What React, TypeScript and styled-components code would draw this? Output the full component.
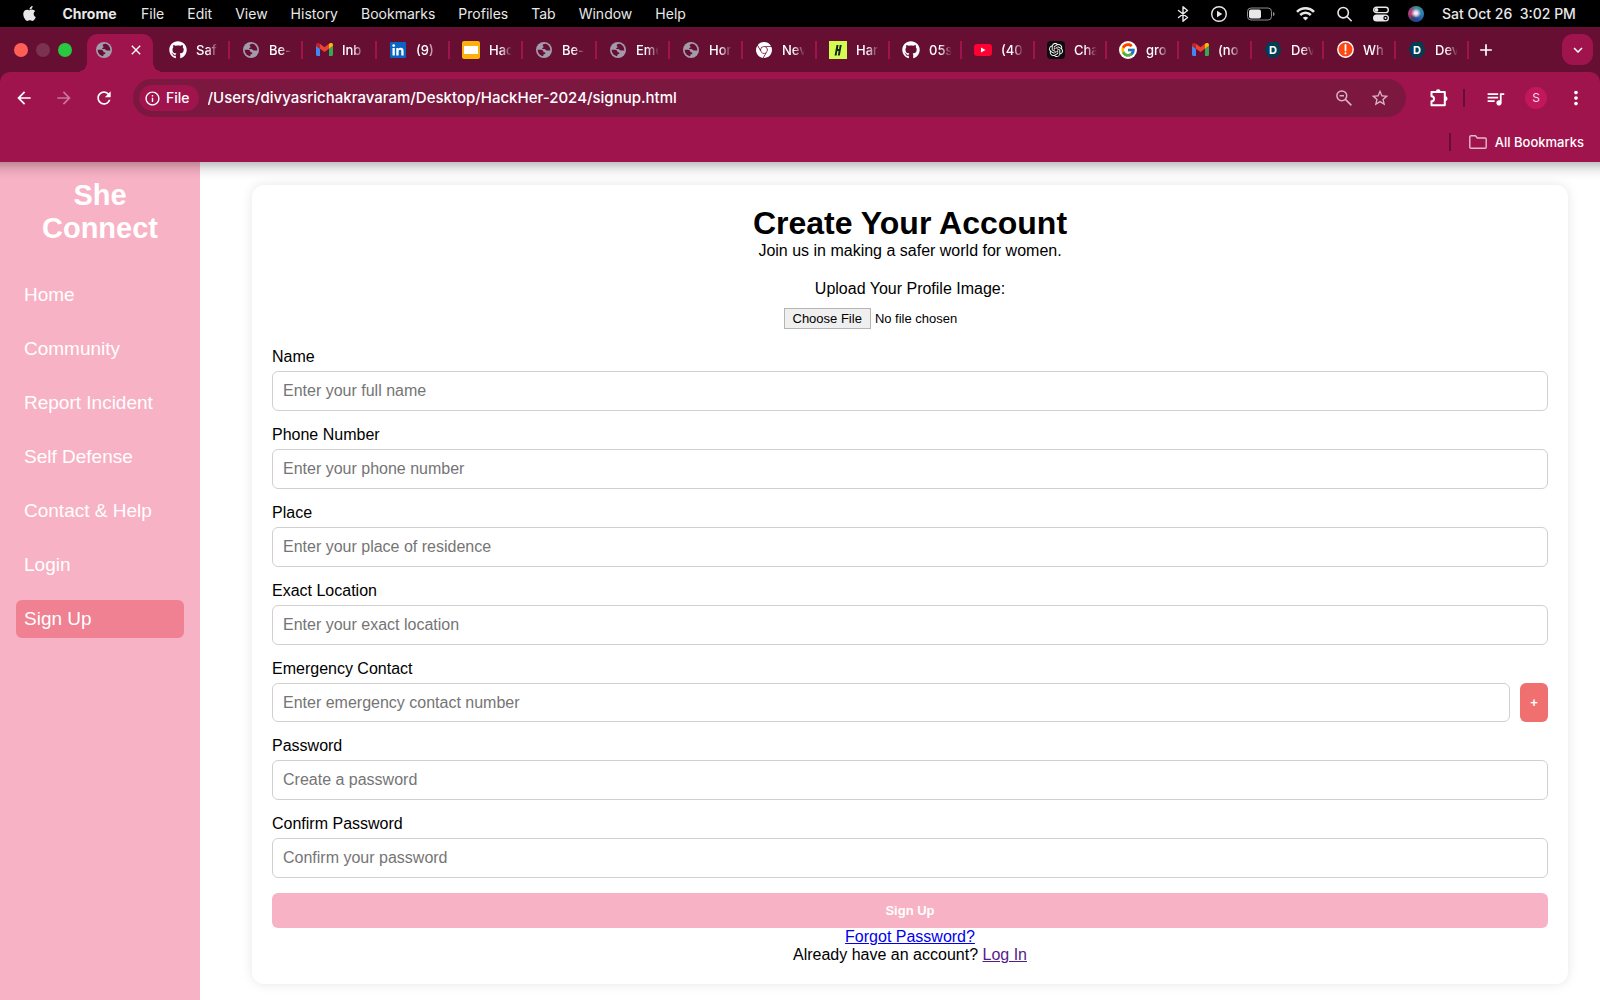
import React from "react";
import styled, { createGlobalStyle } from "styled-components";
import {
  MdAdd,
  MdArrowBack,
  MdArrowForward,
  MdClose,
  MdInfoOutline,
  MdKeyboardArrowDown,
  MdMoreVert,
  MdQueueMusic,
  MdRefresh,
  MdStarBorder,
} from "react-icons/md";
import { FaApple, FaGithub } from "react-icons/fa";
import { FcGoogle } from "react-icons/fc";
import { SiGooglechrome, SiOpenai } from "react-icons/si";

const color = {
  strip: "#660f33",
  toolbar: "#9f144d",
  field: "#7c173f",
  pink: "#f8b2c5",
  pinkActive: "#f08192",
  coral: "#f07070",
};

const uiFont = `Inter, Roboto, "Liberation Sans", sans-serif`;
const pageFont = `"Liberation Sans", Arial, sans-serif`;

const GlobalStyle = createGlobalStyle`
  *, *::before, *::after { box-sizing: border-box; }
  body { margin: 0; background: #fff; color: #000; font-family: ${pageFont}; font-size: 16px; line-height: 18px; }
  button, input { font-family: inherit; margin: 0; }
  h1, h2, p, ul { margin: 0; padding: 0; }
  svg { display: block; flex: none; }
`;

const Screen = styled.div`
  display: flex;
  flex-direction: column;
  min-height: 100vh;
`;

const PlainButton = styled.button`
  display: flex;
  align-items: center;
  justify-content: center;
  padding: 0;
  border: 0;
  background: none;
  color: #fff;
`;

/* ---------- system menu bar ---------- */

const MenuBar = styled.header`
  display: flex;
  align-items: center;
  justify-content: space-between;
  height: 27px;
  padding: 0 20px 0 21px;
  background: #000;
  color: #e8e8e8;
  font: 500 14px/18px ${uiFont};
`;

const Menus = styled.nav`
  display: flex;
  align-items: center;
  gap: 23px;
`;

const MenuItem = styled(PlainButton)<{ $bold?: boolean }>`
  min-width: ${(p) => (p.$bold ? "57px" : "0")};
  color: inherit;
  font: ${(p) => (p.$bold ? 700 : 400)} 14px/18px ${uiFont};
`;

const StatusItems = styled.div`
  display: flex;
  align-items: center;
  gap: 18px;
  white-space: pre;
`;

const Clock = styled.span`
  min-width: 138px;
`;

const Siri = styled.span`
  width: 16px;
  height: 16px;
  border-radius: 50%;
  background: radial-gradient(circle at 50% 45%, #f4e6f4 0 12%, transparent 42%),
    conic-gradient(#3b8f8b, #2d7fb8 25%, #234c9a 45%, #35406f 60%, #c0396b 75%, #8a4a8a 88%, #3b8f8b);
`;

/* ---------- tab strip ---------- */

const TabStrip = styled.div`
  display: flex;
  align-items: center;
  height: 45px;
  padding: 0 7px 0 14px;
  background: ${color.strip};
`;

const WindowControls = styled.div`
  display: flex;
  gap: 8px;
  margin-right: 15px;
`;

const Light = styled.button<{ $fill: string }>`
  width: 14px;
  height: 14px;
  padding: 0;
  border: 0;
  border-radius: 50%;
  background: ${(p) => p.$fill};
`;

const ActiveTab = styled.div`
  position: relative;
  display: flex;
  align-items: center;
  justify-content: space-between;
  align-self: flex-end;
  width: 66px;
  height: 38px;
  margin-right: 4px;
  padding: 0 9px 6px;
  border-radius: 10px 10px 0 0;
  background: ${color.toolbar};

  &::before,
  &::after {
    content: "";
    position: absolute;
    bottom: 0;
    width: 10px;
    height: 10px;
  }
  &::before {
    right: 100%;
    background: radial-gradient(circle at 0 0, transparent 10px, ${color.toolbar} 10px);
  }
  &::after {
    left: 100%;
    background: radial-gradient(circle at 100% 0, transparent 10px, ${color.toolbar} 10px);
  }
`;

const TabList = styled.div`
  display: flex;
`;

const Tab = styled(PlainButton)`
  justify-content: flex-start;
  gap: 9px;
  width: 73px;
  height: 18px;
  padding-left: 12px;
  border-right: 2px solid ${color.toolbar};
  font: 500 13px/18px ${uiFont};

  &:nth-child(3n) { width: 74px; }
  &:nth-child(n + 11) { width: 72px; }
  &:nth-child(n + 11):nth-child(3n) { width: 73px; }
`;

const TabIcon = styled.span`
  display: grid;
  place-items: center;
  width: 18px;
  height: 18px;
`;

const TabTitle = styled.span`
  width: 24px;
  white-space: nowrap;
  text-align: left;
  mask-image: linear-gradient(90deg, #000 45%, transparent 95%);
`;

const NewTab = styled(PlainButton)`
  width: 34px;
`;

const TabSearch = styled(PlainButton)`
  width: 31px;
  height: 31px;
  margin-left: auto;
  border-radius: 11px;
  background: ${color.toolbar};
`;

/* ---------- toolbar ---------- */

const ToolbarBack = styled.div`
  position: relative;
  background: ${color.strip};

  &::after {
    content: "";
    position: absolute;
    top: 100%;
    left: 0;
    right: 0;
    height: 18px;
    background: linear-gradient(rgba(0, 0, 0, 0.24), rgba(0, 0, 0, 0.09) 40%, rgba(0, 0, 0, 0.02) 75%, transparent);
    pointer-events: none;
  }
`;

const Toolbar = styled.div`
  border-radius: 10px 10px 0 0;
  background: ${color.toolbar};
`;

const NavRow = styled.div`
  display: flex;
  align-items: center;
  padding: 7px 12px 0 4px;
`;

const NavButton = styled(PlainButton)`
  width: 40px;
  height: 38px;

  &:disabled { color: #cc7698; }
`;

const AddressBar = styled.div`
  display: flex;
  flex: 1;
  align-items: center;
  height: 38px;
  margin: 0 8px 0 9px;
  padding: 0 14px 0 6px;
  border-radius: 19px;
  background: ${color.field};
  color: #d9b3c3;
`;

const FileChip = styled(PlainButton)`
  gap: 5px;
  height: 26px;
  padding: 0 9px 0 5px;
  border-radius: 13px;
  background: ${color.toolbar};
  font: 500 14px/18px ${uiFont};
`;

const AddressInput = styled.input`
  flex: 1;
  min-width: 0;
  padding: 0 9px;
  border: 0;
  outline: 0;
  background: none;
  color: #fff;
  font: 500 15px/20px ${uiFont};
`;

const AddressButton = styled(PlainButton)`
  width: 48px;
  height: 26px;
  color: inherit;

  &:last-child { width: 24px; }
`;

const Divider = styled.span`
  width: 2px;
  height: 18px;
  background: ${color.strip};
`;

const Actions = styled.div`
  display: flex;
  align-items: center;
`;

const Action = styled(PlainButton)`
  width: 49px;
  height: 38px;
`;

const MediaAction = styled(Action)`
  width: 60px;
`;

const Avatar = styled(PlainButton)`
  width: 22px;
  height: 22px;
  border-radius: 50%;
  background: #c2185b;
  color: #f6dbe6;
  font: 12px/18px ${uiFont};
`;

const MoreAction = styled(PlainButton)`
  width: 24px;
  height: 38px;
  margin-left: 17px;
`;

const BookmarksRow = styled.div`
  display: flex;
  align-items: center;
  justify-content: flex-end;
  height: 45px;
  padding: 5px 16px 0 0;
`;

const AllBookmarks = styled(PlainButton)`
  gap: 8px;
  margin-left: 18px;
  font: 500 13px/18px ${uiFont};
`;

/* ---------- web page ---------- */

const Page = styled.div`
  display: flex;
  flex: 1;
`;

const Sidebar = styled.aside`
  flex: none;
  width: 200px;
  padding: 17px 16px;
  background: ${color.pink};
`;

const Brand = styled.h2`
  margin-bottom: 31px;
  color: #fff;
  font-size: 29px;
  line-height: 33px;
  text-align: center;
`;

const SideNav = styled.nav`
  display: flex;
  flex-direction: column;
  gap: 16px;
`;

const SideLink = styled.a<{ $active?: boolean }>`
  padding: 8px;
  border-radius: 6px;
  background: ${(p) => (p.$active ? color.pinkActive : "transparent")};
  color: #fff;
  font-size: 19px;
  line-height: 22px;
  text-decoration: none;
`;

const Main = styled.main`
  flex: 1;
  padding: 23px 32px 15px 52px;
`;

const Card = styled.section`
  padding: 20px;
  border-radius: 12px;
  background: #fff;
  box-shadow: 0 0 12px rgba(0, 0, 0, 0.1);
  text-align: center;
`;

const Title = styled.h1`
  font-size: 32px;
  line-height: 37px;
`;

const Form = styled.form`
  display: flex;
  flex-direction: column;
  gap: 15px;
  margin-top: 20px;
`;

const Upload = styled.div`
  display: flex;
  flex-direction: column;
  align-items: center;
  gap: 10px;
  margin-bottom: 3px;
`;

const FileInput = styled.input`
  width: 253px;
  height: 22px;
  font-size: 13px;
  line-height: 16px;

  &::file-selector-button {
    height: 21px;
    padding: 1px 8px;
    border: 1px solid #b5b5b5;
    border-radius: 0;
    background: #efefef;
    font: inherit;
  }
`;

const Field = styled.div`
  display: flex;
  flex-direction: column;
  gap: 5px;
  text-align: left;
`;

const FieldRow = styled.div<{ $compact?: boolean }>`
  display: flex;
  gap: 10px;
  height: ${(p) => (p.$compact ? "39px" : "40px")};
`;

const TextInput = styled.input`
  flex: 1 1 auto;
  width: 100%;
  min-width: 0;
  padding: 0 10px;
  border: 1px solid #d0d0d0;
  border-radius: 6px;
  background: #fff;
  font-size: 16px;
  line-height: 18px;

  &::placeholder { color: #757575; opacity: 1; }
`;

const AddButton = styled.button`
  flex: none;
  width: 28px;
  border: 0;
  border-radius: 6px;
  background: ${color.coral};
  color: #fff;
  padding: 0;
  font-size: 13px;
  font-weight: 700;
`;

const SubmitButton = styled.button`
  height: 35px;
  border: 0;
  border-radius: 6px;
  background: ${color.pink};
  color: #fff;
  font-size: 13px;
  font-weight: 700;
`;

const TextLink = styled.a<{ $visited?: boolean }>`
  color: ${(p) => (p.$visited ? "#551a8b" : "#0000ee")};
  text-decoration: underline;
`;

/* ---------- drawings ---------- */

const Globe = () => (
  <svg width="16" height="16" viewBox="0 0 16 16" aria-hidden="true">
    <circle cx="8" cy="8" r="8" fill="#a39bab" />
    <path
      d="M9.300 1.800c-1.700.2-2.600.8-2.600 1.700 0 .8.900.8.900 1.500 0 .8-1.500.5-1.500 1.500 0 .9 1.200.6 2.200.6 1.300 0 1.200 1.300 2.300 1.300h3.700c.1-3.300-1.900-5.900-5-6.600zM1.700 7.800h3.400c1.100 0 2.300.8 2.300 1.900 0 .8.900.5 1.500.7.700.3.6 1.300-.1 1.500-.9.200-1.300.3-1.300 1.100 0 .5-.3.900-.8 1.200C3.900 13.500 1.700 11 1.700 7.800z"
      fill={color.strip}
    />
  </svg>
);

const Gmail = () => (
  <svg width="17" height="13" viewBox="0 0 17 13" aria-hidden="true">
    <path d="M0 2v9.800C0 12.500.5 13 1.200 13H4V5.700L0 2.700z" fill="#4285f4" />
    <path d="M13 13h2.800c.7 0 1.200-.5 1.200-1.200V2.700l-4 3z" fill="#34a853" />
    <path d="M13 .8v4.900l4-3V1.900C17 .2 15.200-.5 14 .3z" fill="#fbbc04" />
    <path d="M4 5.700V.8l4.500 3.400L13 .8v4.900L8.500 9z" fill="#ea4335" />
    <path d="M0 1.900v.8l4 3V.8L3 .3C1.700-.5 0 .3 0 1.900z" fill="#c5221f" />
  </svg>
);

const LinkedIn = () => (
  <svg width="16" height="16" viewBox="0 0 16 16" aria-hidden="true">
    <rect width="16" height="16" rx="1" fill="#0a66c2" />
    <path d="M2.500 6h2.300v7.500H2.500zM6.300 6h2.200v1c.4-.7 1.200-1.200 2.300-1.200 2.200 0 2.800 1.400 2.800 3.300v4.400h-2.300V9.600c0-1-.2-1.800-1.200-1.800-1.100 0-1.500.8-1.500 1.800v3.900H6.300z" fill="#fff" />
    <circle cx="3.700" cy="3.600" r="1.400" fill="#fff" />
  </svg>
);

const Slides = () => (
  <svg width="18" height="18" viewBox="0 0 18 18" aria-hidden="true">
    <rect width="18" height="18" rx="2" fill="#fbb10b" />
    <rect x="2" y="5" width="14" height="8" fill="#fff" />
  </svg>
);

const Handshake = () => (
  <svg width="18" height="18" viewBox="0 0 18 18" aria-hidden="true">
    <rect width="18" height="18" fill="#d3fb52" />
    <path d="M7.500 4h2L8.900 8h1.200l.6-4h2l-1.900 10.500h-2l.8-4.400H8.300l-.7 4.400h-2z" fill="#12261b" />
  </svg>
);

const YouTube = () => (
  <svg width="18" height="12" viewBox="0 0 18 12" aria-hidden="true">
    <rect width="18" height="12" rx="3" fill="#ff0033" />
    <path d="M7 3.400v5.200L11.500 6z" fill="#fff" />
  </svg>
);

const OpenAIBadge = styled.span`
  display: grid;
  place-items: center;
  width: 18px;
  height: 18px;
  border-radius: 4px;
  background: #0d0d0d;
`;

const GoogleBadge = styled.span`
  display: grid;
  place-items: center;
  width: 18px;
  height: 18px;
  border-radius: 50%;
  background: #fff;
`;

const DevpostBadge = styled.span`
  display: grid;
  place-items: center;
  width: 17px;
  height: 16px;
  background: #003e54;
  clip-path: polygon(25% 0, 75% 0, 100% 50%, 75% 100%, 25% 100%, 0 50%);
  font-size: 11px;
  font-weight: 700;
  line-height: 16px;
`;

const Alert = () => (
  <svg width="17" height="17" viewBox="0 0 17 17" aria-hidden="true">
    <circle cx="8.500" cy="8.500" r="7.700" fill="#ff4713" stroke="#fff" strokeWidth="1.400" />
    <path d="M8.500 4v5.500" stroke="#fff" strokeWidth="1.800" strokeLinecap="round" />
    <circle cx="8.500" cy="12.300" r="1.100" fill="#fff" />
  </svg>
);

const Bluetooth = () => (
  <svg width="18" height="18" viewBox="0 0 18 18" fill="none" stroke="#e8e8e8" strokeWidth="1.400" strokeLinejoin="round" strokeLinecap="round" aria-hidden="true">
    <path d="M4.500 5.500l9 7L9 16.300V1.700l4.500 3.800-9 7" />
  </svg>
);

const PlayCircle = () => (
  <svg width="18" height="18" viewBox="0 0 18 18" aria-hidden="true">
    <circle cx="9" cy="9" r="7.300" fill="none" stroke="#e8e8e8" strokeWidth="1.400" />
    <path d="M7 5.800v6.400L12.300 9z" fill="#e8e8e8" />
  </svg>
);

const Battery = () => (
  <svg width="32" height="14" viewBox="0 0 32 14" aria-hidden="true">
    <rect x="1.500" y="1" width="24" height="12" rx="3.500" fill="none" stroke="#8d8d8d" />
    <rect x="3" y="2.500" width="12" height="9" rx="2" fill="#e8e8e8" />
    <path d="M27 5v4.200c1-.3 1.600-1.100 1.600-2.100S28 5.300 27 5z" fill="#8d8d8d" />
  </svg>
);

const Wifi = () => (
  <svg width="22" height="16" viewBox="0 0 22 16" fill="none" stroke="#e8e8e8" strokeWidth="2.500" aria-hidden="true">
    <path d="M1 5.800c4.700-4.600 12.300-4.600 17 0" />
    <path d="M4.200 9c2.900-2.900 7.700-2.900 10.600 0" />
    <path d="M9.500 14.500L6.800 11.700c1.500-1.400 3.900-1.400 5.400 0z" fill="#e8e8e8" stroke="none" />
  </svg>
);

const Spotlight = () => (
  <svg width="18" height="18" viewBox="0 0 18 18" fill="none" stroke="#e8e8e8" strokeWidth="1.600" strokeLinecap="round" aria-hidden="true">
    <circle cx="7.200" cy="7.700" r="5.200" />
    <path d="M11.200 11.700l4 4" />
  </svg>
);

const ControlCenter = () => (
  <svg width="18" height="16" viewBox="0 0 18 16" aria-hidden="true">
    <rect x="1.700" y="1.200" width="14.600" height="5.400" rx="2.700" fill="none" stroke="#e8e8e8" strokeWidth="1.400" />
    <circle cx="4.500" cy="3.900" r="1.900" fill="#e8e8e8" />
    <rect x="1" y="8.500" width="16" height="7" rx="3.500" fill="#e8e8e8" />
    <circle cx="13.500" cy="12" r="2.200" fill="#000" />
    <circle cx="13.500" cy="12" r="1" fill="#e8e8e8" />
  </svg>
);

const ZoomOut = () => (
  <svg width="18" height="18" viewBox="0 0 18 18" fill="none" stroke="currentColor" strokeWidth="1.500" aria-hidden="true">
    <circle cx="6.800" cy="6.800" r="4.900" />
    <path d="M10.400 10.400l6 6M4.600 6.800H9" />
  </svg>
);

const Puzzle = () => (
  <svg width="20" height="20" viewBox="0 0 20 20" aria-hidden="true">
    <path
      d="M2.500 4h13.300v13.300H2.500v-4.100c1.500 0 2.500-1.200 2.500-2.500S4 8.200 2.500 8.200z"
      fill="none"
      stroke="#fff"
      strokeWidth="2"
      strokeLinejoin="round"
    />
    <path d="M6.900 3.600a2.300 2.300 0 0 1 4.600 0zM16.200 8.300a2.300 2.300 0 0 1 0 4.700z" fill="#fff" />
  </svg>
);

const Folder = () => (
  <svg width="18" height="14" viewBox="0 0 18 14" fill="none" stroke="#e3bccb" strokeWidth="1.400" strokeLinejoin="round" aria-hidden="true">
    <path d="M.8 12V1.900c0-.6.4-1.100 1-1.100h4.700L8.300 3h7.900c.6 0 1 .5 1 1v8c0 .6-.4 1.200-1 1.200H1.800c-.6 0-1-.6-1-1.200z" />
  </svg>
);

/* ---------- content ---------- */

const devpost = <DevpostBadge>D</DevpostBadge>;

const tabs: { title: string; icon: React.ReactNode }[] = [
  { title: "Saf", icon: <FaGithub size={18} /> },
  { title: "Be-", icon: <Globe /> },
  { title: "Inb", icon: <Gmail /> },
  { title: "(9)", icon: <LinkedIn /> },
  { title: "Hac", icon: <Slides /> },
  { title: "Be-", icon: <Globe /> },
  { title: "Eme", icon: <Globe /> },
  { title: "Hor", icon: <Globe /> },
  { title: "Nev", icon: <SiGooglechrome size={16} /> },
  { title: "Har", icon: <Handshake /> },
  { title: "05s", icon: <FaGithub size={18} /> },
  { title: "(40", icon: <YouTube /> },
  { title: "Cha", icon: <OpenAIBadge><SiOpenai size={14} /></OpenAIBadge> },
  { title: "gro", icon: <GoogleBadge><FcGoogle size={16} /></GoogleBadge> },
  { title: "(no", icon: <Gmail /> },
  { title: "Dev", icon: devpost },
  { title: "Wh", icon: <Alert /> },
  { title: "Dev", icon: devpost },
];

const menus = ["File", "Edit", "View", "History", "Bookmarks", "Profiles", "Tab", "Window", "Help"];

const sideLinks = ["Home", "Community", "Report Incident", "Self Defense", "Contact & Help", "Login", "Sign Up"];

const fields = [
  { id: "name", label: "Name", hint: "Enter your full name", type: "text" },
  { id: "phone", label: "Phone Number", hint: "Enter your phone number", type: "tel" },
  { id: "place", label: "Place", hint: "Enter your place of residence", type: "text" },
  { id: "location", label: "Exact Location", hint: "Enter your exact location", type: "text" },
  { id: "emergency", label: "Emergency Contact", hint: "Enter emergency contact number", type: "tel", addable: true },
  { id: "password", label: "Password", hint: "Create a password", type: "password" },
  { id: "confirm", label: "Confirm Password", hint: "Confirm your password", type: "password" },
];

const SystemBar = () => (
  <MenuBar>
    <Menus aria-label="Application menu">
      <MenuItem aria-label="Apple menu"><FaApple size={17} /></MenuItem>
      <MenuItem $bold>Chrome</MenuItem>
      {menus.map((m) => <MenuItem key={m}>{m}</MenuItem>)}
    </Menus>
    <StatusItems>
      <Bluetooth />
      <PlayCircle />
      <Battery />
      <Wifi />
      <Spotlight />
      <ControlCenter />
      <Siri />
      <Clock>Sat Oct 26  3:02 PM</Clock>
    </StatusItems>
  </MenuBar>
);

const BrowserTabs = () => (
  <TabStrip>
    <WindowControls>
      <Light $fill="#ff5f57" aria-label="Close window" />
      <Light $fill="#7b3150" aria-label="Minimize window" />
      <Light $fill="#28c840" aria-label="Full screen" />
    </WindowControls>
    <ActiveTab>
      <Globe />
      <PlainButton aria-label="Close tab"><MdClose size={16} /></PlainButton>
    </ActiveTab>
    <TabList>
      {tabs.map((t, i) => (
        <Tab key={i}>
          <TabIcon>{t.icon}</TabIcon>
          <TabTitle>{t.title}</TabTitle>
        </Tab>
      ))}
    </TabList>
    <NewTab aria-label="New tab"><MdAdd size={20} /></NewTab>
    <TabSearch aria-label="Search tabs"><MdKeyboardArrowDown size={18} /></TabSearch>
  </TabStrip>
);

const BrowserToolbar = () => (
  <ToolbarBack>
    <Toolbar>
      <NavRow>
        <NavButton aria-label="Back"><MdArrowBack size={20} /></NavButton>
        <NavButton aria-label="Forward" disabled><MdArrowForward size={20} /></NavButton>
        <NavButton aria-label="Reload"><MdRefresh size={20} /></NavButton>
        <AddressBar>
          <FileChip><MdInfoOutline size={17} />File</FileChip>
          <AddressInput
            aria-label="Address"
            defaultValue="/Users/divyasrichakravaram/Desktop/HackHer-2024/signup.html"
          />
          <AddressButton aria-label="Zoom"><ZoomOut /></AddressButton>
          <AddressButton aria-label="Bookmark this page"><MdStarBorder size={20} /></AddressButton>
        </AddressBar>
        <Actions>
          <Action aria-label="Extensions"><Puzzle /></Action>
          <Divider />
          <MediaAction aria-label="Media"><MdQueueMusic size={21} /></MediaAction>
          <Avatar aria-label="Profile">S</Avatar>
          <MoreAction aria-label="More"><MdMoreVert size={22} /></MoreAction>
        </Actions>
      </NavRow>
      <BookmarksRow>
        <Divider />
        <AllBookmarks><Folder />All Bookmarks</AllBookmarks>
      </BookmarksRow>
    </Toolbar>
  </ToolbarBack>
);

const SignUpForm = () => (
  <Form onSubmit={(e) => e.preventDefault()}>
    <Upload>
      <label htmlFor="avatar">Upload Your Profile Image:</label>
      <FileInput id="avatar" type="file" />
    </Upload>
    {fields.map((f) => (
      <Field key={f.id}>
        <label htmlFor={f.id}>{f.label}</label>
        <FieldRow $compact={f.addable}>
          <TextInput id={f.id} type={f.type} placeholder={f.hint} />
          {f.addable && <AddButton type="button" aria-label="Add contact">+</AddButton>}
        </FieldRow>
      </Field>
    ))}
    <SubmitButton type="submit">Sign Up</SubmitButton>
  </Form>
);

export default function App() {
  return (
    <Screen>
      <GlobalStyle />
      <SystemBar />
      <BrowserTabs />
      <BrowserToolbar />
      <Page>
        <Sidebar>
          <Brand>She Connect</Brand>
          <SideNav>
            {sideLinks.map((l) => (
              <SideLink key={l} href="#" $active={l === "Sign Up"}>{l}</SideLink>
            ))}
          </SideNav>
        </Sidebar>
        <Main>
          <Card>
            <Title>Create Your Account</Title>
            <p>Join us in making a safer world for women.</p>
            <SignUpForm />
            <p><TextLink href="#">Forgot Password?</TextLink></p>
            <p>Already have an account? <TextLink href="#" $visited>Log In</TextLink></p>
          </Card>
        </Main>
      </Page>
    </Screen>
  );
}
